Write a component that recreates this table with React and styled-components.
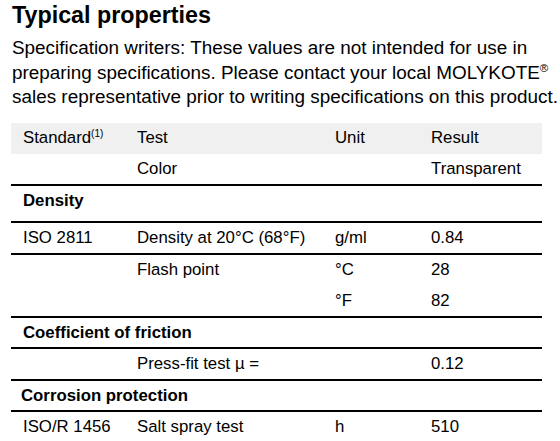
import React from 'react'
import styled, { createGlobalStyle } from 'styled-components'

const GlobalStyle = createGlobalStyle`
  body {
    margin: 0;
    background: #fff;
    color: #000;
    font-family: "Liberation Sans", Arial, sans-serif;
  }
`

const Page = styled.div`
  width: 560px;
  height: 441px;
  overflow: hidden;
  padding: 2px 0 0 11px;
  box-sizing: border-box;
`

const Title = styled.h1`
  margin: 0 0 0 1px;
  font-size: 23.3px;
  line-height: 26px;
  font-weight: 700;
`

const Intro = styled.p`
  margin: 8px 0 13px 1px;
  font-size: 18.9px;
  line-height: 24.5px;
  white-space: nowrap;

  sup {
    font-size: 11.5px;
    line-height: 0;
  }
`

const Table = styled.div`
  width: 531px;
  font-size: 16.8px;
`

const Row = styled.div`
  display: grid;
  grid-template-columns: 114px 198px 96px 1fr;
  height: ${p => p.$h || 30}px;
  line-height: 30px;
  background: ${p => (p.$head ? '#f0f0f0' : 'transparent')};
  border-bottom: ${p => (p.$rule ? '2px solid #000' : 'none')};
  align-items: start;
  white-space: nowrap;
`

const Cell = styled.div`
  padding-left: 12px;

  sup {
    font-size: 10px;
    line-height: 0;
    vertical-align: 6px;
  }
`

const Section = styled.div`
  height: ${p => p.$h || 29}px;
  line-height: 30px;
  padding-left: ${p => p.$indent || 12}px;
  font-weight: 700;
  border-bottom: 2px solid #000;
`

const rows = [
  { type: 'row', cells: ['', 'Color', '', 'Transparent'], rule: true },
  { type: 'section', title: 'Density', h: 35 },
  { type: 'row', cells: ['ISO 2811', 'Density at 20°C (68°F)', 'g/ml', '0.84'], rule: true },
  { type: 'row', cells: ['', 'Flash point', '°C', '28'], h: 31 },
  { type: 'row', cells: ['', '', '°F', '82'], rule: true },
  { type: 'section', title: 'Coefficient of friction' },
  { type: 'row', cells: ['', 'Press-fit test µ =', '', '0.12'], rule: true },
  { type: 'section', title: 'Corrosion protection', indent: 10 },
  { type: 'row', cells: ['ISO/R 1456', 'Salt spray test', 'h', '510'] },
]

export default function App() {
  return (
    <Page>
      <GlobalStyle />
      <Title>Typical properties</Title>
      <Intro>
        Specification writers: These values are not intended for use in
        <br />
        preparing specifications. Please contact your local MOLYKOTE<sup>®</sup>
        <br />
        sales representative prior to writing specifications on this product.
      </Intro>
      <Table>
        <Row $head $h={31}>
          <Cell>
            Standard<sup>(1)</sup>
          </Cell>
          <Cell>Test</Cell>
          <Cell>Unit</Cell>
          <Cell>Result</Cell>
        </Row>
        {rows.map((r, i) =>
          r.type === 'section' ? (
            <Section key={i} $h={r.h} $indent={r.indent}>
              {r.title}
            </Section>
          ) : (
            <Row key={i} $rule={r.rule} $h={r.h}>
              {r.cells.map((c, j) => (
                <Cell key={j}>{c}</Cell>
              ))}
            </Row>
          )
        )}
      </Table>
    </Page>
  )
}
